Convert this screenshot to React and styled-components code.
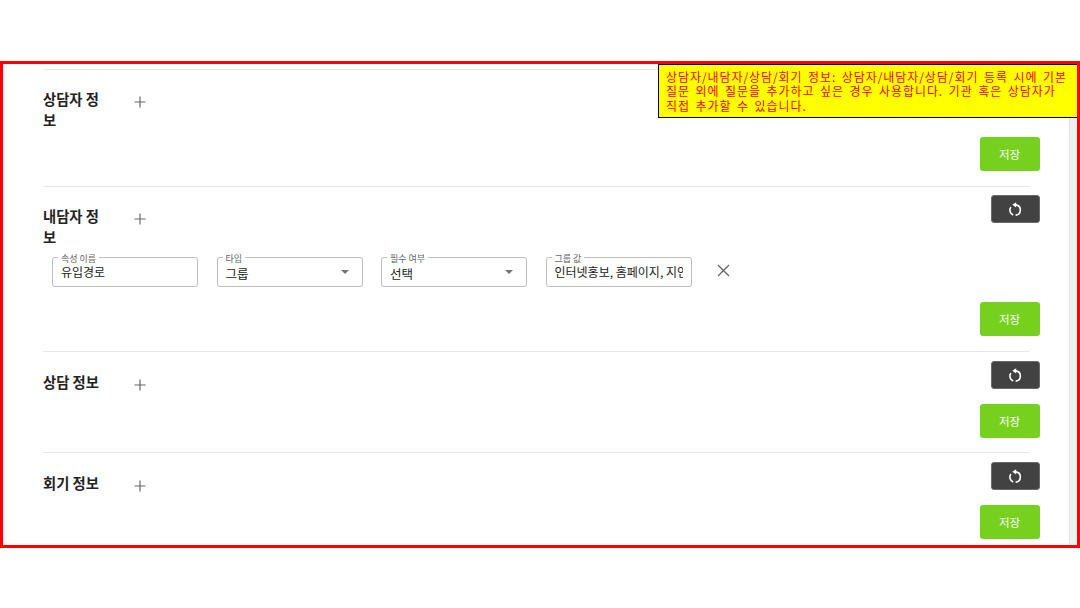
import React from "react";
import styled, { createGlobalStyle } from "styled-components";

const Global = createGlobalStyle`
  html, body { margin: 0; padding: 0; background: #fff; }
  body { font-family: "Noto Sans CJK KR", "Noto Sans", sans-serif; color: #222; }
`;

const Frame = styled.div`
  position: relative;
  box-sizing: border-box;
  margin-top: 61px;
  height: 487px;
  border: 3px solid #ff0000;
  display: flex;
  overflow: hidden;
`;

const Note = styled.div`
  position: absolute;
  top: 0;
  right: -1px;
  box-sizing: border-box;
  width: 420px;
  height: 54px;
  padding: 4.5px 7px;
  background: #ffff00;
  border: 1px solid #000;
  color: #ff0000;
  font-size: 12px;
  line-height: 14.7px;
  letter-spacing: 0.92px;
  word-spacing: 2px;
`;

const Content = styled.div`
  flex: 1;
  min-width: 0;
  padding: 5px 40px 0 40px;
`;

const Scrollbar = styled.div`
  width: 7px;
  flex: none;
  background: #f1f1f1;
  border-left: 1px solid #e4e4e4;
`;

const Section = styled.section`
  border-top: 1px solid #e8e8e8;
  padding: ${(p) => (p.$lower ? "9px 0 14px" : "8px 0 15px")};
  width: 987px;
`;

const Header = styled.div`
  display: flex;
  justify-content: space-between;
  align-items: flex-start;
  margin-right: -9.5px;
`;

const TitleGroup = styled.div`
  display: flex;
  align-items: flex-start;
`;

const Title = styled.h3`
  width: 62px;
  margin: 0;
  padding-top: 10px;
  font-size: 14.3px;
  line-height: 21px;
  font-weight: 700;
  color: #222;
`;

const IconButton = styled.button`
  width: 19px;
  height: 19px;
  margin: 14px 0 0 25.5px;
  padding: 0;
  border: 0;
  background: none;
  color: #666;
  display: flex;
  align-items: center;
  justify-content: center;
`;

const ResetButton = styled.button`
  width: 49px;
  height: 28px;
  padding: 0;
  border: 1px solid #6a6a6a;
  border-radius: 3px;
  background: #424242;
  color: #fff;
  display: flex;
  align-items: center;
  justify-content: center;
`;

const Row = styled.div`
  display: flex;
  align-items: flex-start;
  gap: 18.5px;
  margin-top: 10px;
  padding-left: 9px;
`;

const Field = styled.div`
  position: relative;
  box-sizing: border-box;
  width: 146px;
  height: 30px;
  border: 1px solid #bdbdbd;
  border-radius: 3px;
  padding: 0 8px;
  display: flex;
  align-items: center;
  justify-content: space-between;
  font-size: 12.5px;
  color: #222;
`;

const FieldLabel = styled.span`
  position: absolute;
  top: -5px;
  left: 5px;
  padding: 0 3px;
  background: #fff;
  font-size: 9px;
  line-height: 11px;
  color: #666;
`;

const TextValue = styled.input`
  flex: 1;
  min-width: 0;
  width: 100%;
  margin: -2px 0 0;
  padding: 0;
  border: 0;
  outline: 0;
  background: none;
  font: inherit;
  font-size: 12px;
  color: inherit;
`;

const SelectValue = styled.span`
  flex: 1;
  min-width: 0;
  padding-top: 2px;
  white-space: nowrap;
`;

const Caret = styled.span`
  flex: none;
  margin-right: 5px;
  width: 0;
  height: 0;
  border-left: 4.5px solid transparent;
  border-right: 4.5px solid transparent;
  border-top: 4.5px solid #757575;
`;

const CloseButton = styled.button`
  width: 16px;
  height: 16px;
  margin: 5px 0 0 5px;
  padding: 0;
  border: 0;
  background: none;
  color: #666;
  display: flex;
  align-items: center;
  justify-content: center;
`;

const Actions = styled.div`
  display: flex;
  justify-content: flex-end;
  margin: ${(p) => p.$top}px -9.5px 0 0;
`;

const SaveButton = styled.button`
  width: 60px;
  height: 34px;
  padding: 0;
  border: 0;
  border-radius: 3px;
  background: #76d11f;
  color: #fff;
  font-family: inherit;
  font-size: 11.5px;
`;

const PlusIcon = () => (
  <svg width="12" height="12" viewBox="0 0 12 12" fill="none" stroke="currentColor" strokeWidth="1.2">
    <path d="M6 .5v11M.5 6h11" />
  </svg>
);

const CloseIcon = () => (
  <svg width="13" height="13" viewBox="0 0 13 13" fill="none" stroke="currentColor" strokeWidth="1.3">
    <path d="M1 1l11 11M12 1L1 12" />
  </svg>
);

const ResetIcon = () => (
  <svg width="16" height="16" viewBox="0 0 16 16" fill="none" stroke="currentColor" strokeWidth="1.6">
    <path d="M9 3.9A5.2 5.2 0 0 1 8.6 14.2" />
    <path d="M6.2 13.9A5.2 5.2 0 0 1 3.9 5.9" />
    <path d="M9.2 1.2v5.2L5.3 3.8z" fill="currentColor" stroke="none" />
  </svg>
);

const SectionBlock = ({ title, saveTop, lower, children }) => (
  <Section $lower={lower}>
    <Header>
      <TitleGroup>
        <Title>{title}</Title>
        <IconButton aria-label="추가"><PlusIcon /></IconButton>
      </TitleGroup>
      <ResetButton aria-label="초기화"><ResetIcon /></ResetButton>
    </Header>
    {children}
    <Actions $top={saveTop}>
      <SaveButton>저장</SaveButton>
    </Actions>
  </Section>
);

export default function App() {
  return (
    <>
      <Global />
      <Frame>
        <Content>
          <SectionBlock title="상담자 정보" saveTop={7} />
          <SectionBlock title="내담자 정보" saveTop={15}>
            <Row>
              <Field>
                <FieldLabel>속성 이름</FieldLabel>
                <TextValue readOnly value="유입경로" />
              </Field>
              <Field>
                <FieldLabel>타입</FieldLabel>
                <SelectValue>그룹</SelectValue>
                <Caret />
              </Field>
              <Field>
                <FieldLabel>필수 여부</FieldLabel>
                <SelectValue>선택</SelectValue>
                <Caret />
              </Field>
              <Field>
                <FieldLabel>그룹 값</FieldLabel>
                <TextValue readOnly value="인터넷홍보, 홈페이지, 지인소개" />
              </Field>
              <CloseButton aria-label="삭제"><CloseIcon /></CloseButton>
            </Row>
          </SectionBlock>
          <SectionBlock title="상담 정보" saveTop={10} lower />
          <SectionBlock title="회기 정보" saveTop={10} lower />
        </Content>
        <Scrollbar />
        <Note>
          상담자/내담자/상담/회기 정보: 상담자/내담자/상담/회기 등록 시에 기본 질문 외에 질문을 추가하고 싶은 경우 사용합니다. 기관 혹은 상담자가 직접 추가할 수 있습니다.
        </Note>
      </Frame>
    </>
  );
}
